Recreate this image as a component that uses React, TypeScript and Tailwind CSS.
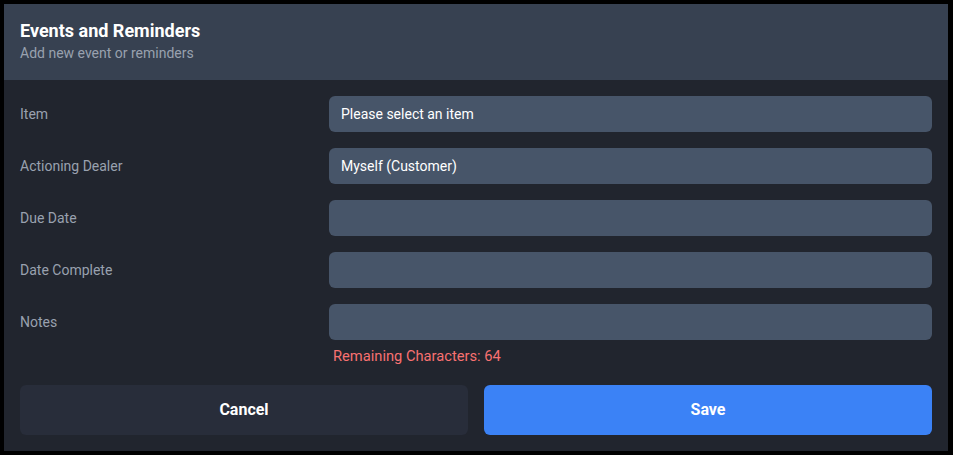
import React from "react"

const rows = [
  { label: "Item", value: "Please select an item" },
  { label: "Actioning Dealer", value: "Myself (Customer)" },
  { label: "Due Date", value: "" },
  { label: "Date Complete", value: "" },
  { label: "Notes", value: "" },
]

export default function App() {
  return (
    <div className="w-[953px] h-[455px] bg-black pt-[4px] pl-[4px] pr-[5px] pb-[4px] font-['Roboto',sans-serif]">
      <div className="h-full flex flex-col bg-[#21252e]">
        <div className="bg-[#374151] px-4 pt-[15px] pb-[17px]">
          <h2 className="text-[18px] leading-6 font-bold text-white">Events and Reminders</h2>
          <p className="text-sm leading-5 text-gray-400">Add new event or reminders</p>
        </div>
        <div className="flex flex-col px-4 pt-4 pb-4">
          <div className="flex flex-col gap-4">
            {rows.map((r) => (
              <div key={r.label} className="flex items-center">
                <label className="w-[309px] text-sm text-gray-400">{r.label}</label>
                <div className="flex-1 h-9 rounded-md bg-[#475569] flex items-center px-3 text-sm text-white">
                  {r.value}
                </div>
              </div>
            ))}
          </div>
          <div className="pl-[313px] mt-[6px] text-[14.7px] leading-5 text-[#f87171]">Remaining Characters: 64</div>
          <div className="flex gap-4 mt-[19px]">
            <button className="flex-1 h-[50px] rounded-md bg-[#282d3a] text-white font-bold text-base">Cancel</button>
            <button className="flex-1 h-[50px] rounded-md bg-[#3b82f6] text-white font-bold text-base">Save</button>
          </div>
        </div>
      </div>
    </div>
  )
}
